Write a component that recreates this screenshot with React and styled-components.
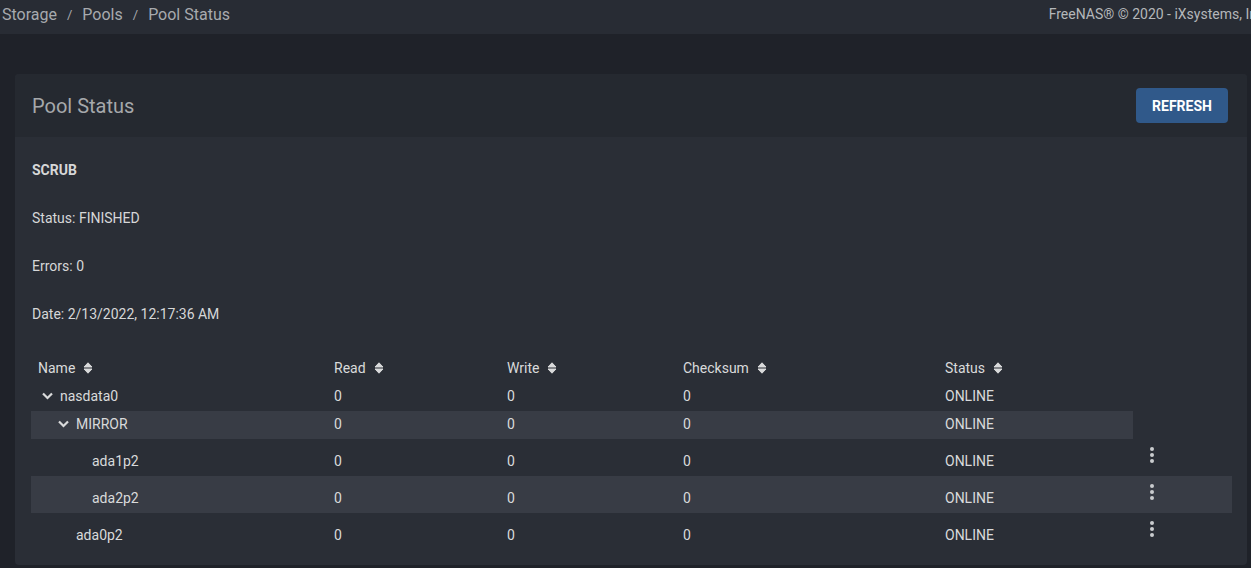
import React from "react";
import styled, { createGlobalStyle } from "styled-components";

const GlobalStyle = createGlobalStyle`
  html, body {
    margin: 0;
    padding: 0;
    background: #1f2229;
    font-family: Roboto, "Liberation Sans", sans-serif;
    overflow: hidden;
  }
`;

const COLS = [296, 173, 176, 262, 195];

const columns = ["Name", "Read", "Write", "Checksum", "Status"];

const rows = [
  { name: "nasdata0", level: 0, expandable: true, band: false, action: false },
  { name: "MIRROR", level: 1, expandable: true, band: true, action: false },
  { name: "ada1p2", level: 2, expandable: false, band: false, action: true },
  { name: "ada2p2", level: 2, expandable: false, band: true, action: true },
  { name: "ada0p2", level: 1, expandable: false, band: false, action: true },
];

const SortIcon = () => (
  <svg width="10" height="14" viewBox="0 0 10 14">
    <path d="M1 6 L5 1.8 L9 6 Z" fill="currentColor" stroke="currentColor" strokeWidth="1" strokeLinejoin="round" />
    <path d="M1 8 L5 12.2 L9 8 Z" fill="currentColor" stroke="currentColor" strokeWidth="1" strokeLinejoin="round" />
  </svg>
);

const Chevron = () => (
  <svg width="11" height="8" viewBox="0 0 11 8">
    <polyline points="1,1.5 5.5,6 10,1.5" fill="none" stroke="currentColor" strokeWidth="2.2" />
  </svg>
);

const MoreVert = () => (
  <svg width="24" height="24" viewBox="0 0 24 24">
    <circle cx="12" cy="6" r="2" fill="currentColor" />
    <circle cx="12" cy="12" r="2" fill="currentColor" />
    <circle cx="12" cy="18" r="2" fill="currentColor" />
  </svg>
);

export default function App() {
  return (
    <>
      <GlobalStyle />
      <TopBar>
        <Crumbs>
          <span>Storage</span>
          <Sep>/</Sep>
          <span>Pools</span>
          <Sep>/</Sep>
          <span>Pool Status</span>
        </Crumbs>
        <Copyright>FreeNAS® © 2020 - iXsystems, Inc.</Copyright>
      </TopBar>
      <Main>
        <Card>
          <CardHeader>
            <Title>Pool Status</Title>
            <RefreshButton>REFRESH</RefreshButton>
          </CardHeader>
          <CardBody>
            <InfoLine $bold>SCRUB</InfoLine>
            <InfoLine>Status: FINISHED</InfoLine>
            <InfoLine>Errors: 0</InfoLine>
            <InfoLine>Date: 2/13/2022, 12:17:36 AM</InfoLine>

            <Table>
              <Row $height={28}>
                {columns.map((c) => (
                  <HeadCell key={c}>
                    {c}
                    <SortIcon />
                  </HeadCell>
                ))}
              </Row>
              {rows.map((r) => (
                <Row key={r.name} $height={r.action ? 37 : 28} $band={r.band} $action={r.action}>
                  <NameCell $level={r.level} $leaf={r.action}>
                    <Toggle>{r.expandable && <Chevron />}</Toggle>
                    {r.name}
                  </NameCell>
                  <Cell $leaf={r.action}>0</Cell>
                  <Cell $leaf={r.action}>0</Cell>
                  <Cell $leaf={r.action}>0</Cell>
                  <Cell $leaf={r.action}>ONLINE</Cell>
                  {r.action && (
                    <ActionCell>
                      <MoreVert />
                    </ActionCell>
                  )}
                </Row>
              ))}
            </Table>
          </CardBody>
        </Card>
      </Main>
    </>
  );
}

const TopBar = styled.header`
  height: 34px;
  box-sizing: border-box;
  padding: 0 0 6px 2px;
  display: flex;
  align-items: center;
  background: #282c34;
  white-space: nowrap;
  overflow: hidden;
`;

const Crumbs = styled.nav`
  display: flex;
  align-items: center;
  font-size: 16px;
  color: #a7aaae;
`;

const Sep = styled.span`
  font-size: 13px;
  margin: 0 10px;
`;

const Copyright = styled.div`
  margin-left: auto;
  margin-right: -17px;
  flex-shrink: 0;
  font-size: 14px;
  color: #b4b7ba;
`;

const Main = styled.main`
  padding: 40px 4px 0 15px;
`;

const Card = styled.section`
  border-radius: 4px;
  overflow: hidden;
  background: #2a2e36;
  height: 491px;
`;

const CardHeader = styled.div`
  height: 63px;
  box-sizing: border-box;
  padding: 0 19px 0 17px;
  display: flex;
  align-items: center;
  justify-content: space-between;
  background: #252930;
`;

const Title = styled.h2`
  margin: 0;
  font-size: 20px;
  font-weight: 400;
  color: #a5a8ab;
`;

const RefreshButton = styled.button`
  width: 92px;
  height: 35px;
  border: none;
  border-radius: 4px;
  background: #30598a;
  color: #ffffff;
  font-family: Roboto, "Liberation Sans", sans-serif;
  font-size: 14px;
  font-weight: 700;
  cursor: pointer;
`;

const CardBody = styled.div`
  padding: 9px 15px 0 16px;
`;

const InfoLine = styled.div`
  height: 48px;
  line-height: 48px;
  padding-left: 1px;
  font-size: 14px;
  font-weight: ${(p) => (p.$bold ? 700 : 400)};
  color: #d6d7d8;
`;

const Table = styled.div`
  margin-top: 17px;
  color: #d9dadb;
  font-size: 14px;
`;

const Row = styled.div`
  display: grid;
  grid-template-columns: ${COLS.map((w) => `${w}px`).join(" ")} ${(p) => (p.$action ? "99px" : "")};
  width: max-content;
  height: ${(p) => p.$height}px;
  align-items: center;
  background: ${(p) => (p.$band ? "#383c45" : "transparent")};
`;

const HeadCell = styled.div`
  display: flex;
  align-items: center;
  gap: 8px;
  padding: 0 0 2px 7px;
`;

const Cell = styled.div`
  padding-left: 7px;
  padding-top: ${(p) => (p.$leaf ? 7 : 0)}px;
  padding-bottom: ${(p) => (p.$leaf ? 0 : 2)}px;
`;

const NameCell = styled.div`
  display: flex;
  align-items: center;
  padding-left: ${(p) => 11 + p.$level * 16}px;
  padding-top: ${(p) => (p.$leaf ? 7 : 0)}px;
  padding-bottom: ${(p) => (p.$leaf ? 0 : 2)}px;
`;

const Toggle = styled.span`
  width: 18px;
  display: flex;
  align-items: center;
`;

const ActionCell = styled.div`
  display: flex;
  padding: 0 0 6px 7px;
  color: #c9cbce;
`;
